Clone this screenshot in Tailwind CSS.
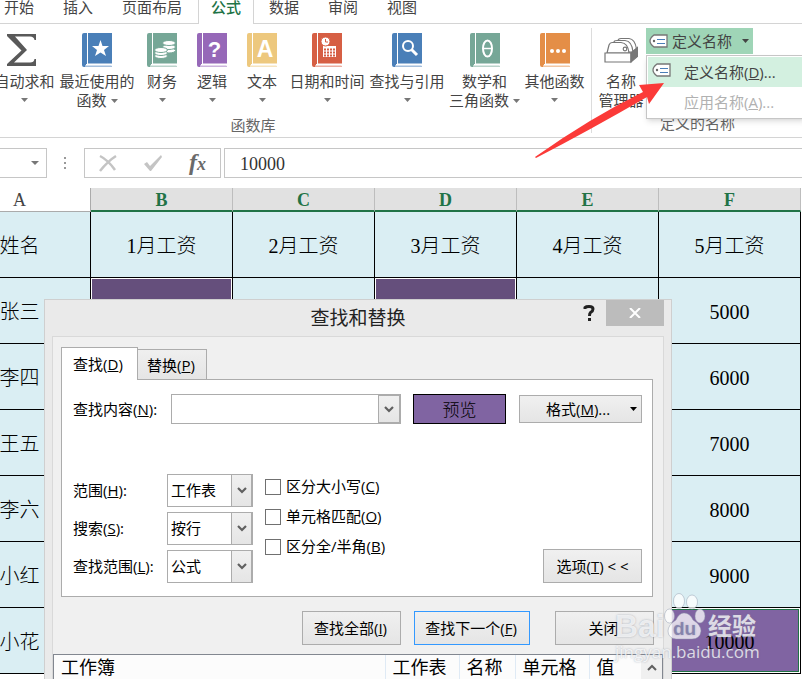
<!DOCTYPE html>
<html lang="zh-CN">
<head>
  <meta charset="UTF-8">
  <title>查找和替换</title>
  <script src="https://cdn.jsdelivr.net/npm/@tailwindcss/browser@4"></script>
</head>
<body class="relative h-screen overflow-hidden bg-white text-[#444] text-[15px] leading-[19px] font-['Open_Sans','Noto_Sans_CJK_SC',sans-serif]">

  <!-- Ribbon tabs -->
  <nav class="flex h-6 whitespace-nowrap">
    <div class="flex flex-1 border-b border-[#d4d4d4] justify-end max-w-[198px] gap-[29px] pr-4">
      <a href="#" class="-mt-[2px]">开始</a>
      <a href="#" class="-mt-[2px]">插入</a>
      <a href="#" class="-mt-[2px]">页面布局</a>
    </div>
    <a href="#" class="border-x border-[#d4d4d4] px-3 text-[#217346] font-medium"><span class="block -mt-[2px]">公式</span></a>
    <div class="flex flex-1 border-b border-[#d4d4d4] gap-[29px] pl-[15px]">
      <a href="#" class="-mt-[2px]">数据</a>
      <a href="#" class="-mt-[2px]">审阅</a>
      <a href="#" class="-mt-[2px]">视图</a>
    </div>
  </nav>

  <!-- Ribbon -->
  <section class="flex h-[114px] border-b border-[#d4d4d4] whitespace-nowrap">
    <div class="relative flex w-[676px] -ml-[85px] shrink-0 flex-col items-end pt-[9px] pr-1">
      <div class="flex">
        <button class="flex w-[65px] flex-col items-center">
          <svg class="h-[34px] w-[34px] -ml-1" viewBox="0 0 34 34"><path d="M1 1H30V7H28.500Q28 3.500 24 3.500H9L21 17L8 29.500H24Q28 29.500 28.500 26H30V33H1V31L15.500 17.500L1 3Z" fill="#595959"/></svg>
          <span class="mt-[5px]">自动求和</span>
          <svg class="mt-[7px] h-1 w-[7px]" viewBox="0 0 7 4"><path d="M0 0H7L3.500 4Z" fill="#777"/></svg>
        </button>
        <button class="flex w-20 flex-col items-center">
          <svg class="h-[34px] w-[30px]" viewBox="0 0 30 34"><path d="M2 0H30V31H4V32.500H30V34H2Q0 34 0 32V2Q0 0 2 0Z" fill="#4a7fb8"/><path d="M5.500 0V31H30V33H3" fill="none" stroke="#fff"/><path d="M18.500 7L20.500 13H27L22 17L24 23L18.500 19.500L13 23L15 17L10 13H16.500Z" fill="#fff"/></svg>
          <span class="mt-[5px]">最近使用的</span>
          <span class="flex items-center gap-1">函数 <svg class="h-1 w-[7px]" viewBox="0 0 7 4"><path d="M0 0H7L3.500 4Z" fill="#777"/></svg></span>
        </button>
        <button class="flex w-[50px] flex-col items-center">
          <svg class="h-[34px] w-[30px]" viewBox="0 0 30 34"><path d="M2 0H30V31H4V32.500H30V34H2Q0 34 0 32V2Q0 0 2 0Z" fill="#76a797"/><path d="M5.500 0V31H30V33H3" fill="none" stroke="#fff"/><g fill="#fff" stroke="#76a797"><ellipse cx="22" cy="17.500" rx="6.500" ry="2.500"/><ellipse cx="22" cy="14" rx="6.500" ry="2.500"/><ellipse cx="22" cy="10" rx="6.500" ry="2.500"/><ellipse cx="14" cy="23" rx="6.500" ry="2.500"/><ellipse cx="14" cy="20" rx="6.500" ry="2.500"/><ellipse cx="14" cy="17" rx="6.500" ry="2.500"/></g></svg>
          <span class="mt-[5px]">财务</span>
          <svg class="mt-[7px] h-1 w-[7px]" viewBox="0 0 7 4"><path d="M0 0H7L3.500 4Z" fill="#777"/></svg>
        </button>
        <button class="flex w-[50px] flex-col items-center">
          <svg class="h-[34px] w-[30px]" viewBox="0 0 30 34"><path d="M2 0H30V31H4V32.500H30V34H2Q0 34 0 32V2Q0 0 2 0Z" fill="#9668b8"/><path d="M5.500 0V31H30V33H3" fill="none" stroke="#fff"/><text x="17.500" y="24" text-anchor="middle" class="font-['Liberation_Sans',sans-serif] text-[22px] font-bold" fill="#fff">?</text></svg>
          <span class="mt-[5px]">逻辑</span>
          <svg class="mt-[7px] h-1 w-[7px]" viewBox="0 0 7 4"><path d="M0 0H7L3.500 4Z" fill="#777"/></svg>
        </button>
        <button class="flex w-[50px] flex-col items-center">
          <svg class="h-[34px] w-[30px]" viewBox="0 0 30 34"><path d="M2 0H30V31H4V32.500H30V34H2Q0 34 0 32V2Q0 0 2 0Z" fill="#edc87e"/><path d="M5.500 0V31H30V33H3" fill="none" stroke="#fff"/><text x="18" y="24" text-anchor="middle" class="font-['Liberation_Sans',sans-serif] text-[23px] font-bold" fill="#fff">A</text></svg>
          <span class="mt-[5px]">文本</span>
          <svg class="mt-[7px] h-1 w-[7px]" viewBox="0 0 7 4"><path d="M0 0H7L3.500 4Z" fill="#777"/></svg>
        </button>
        <button class="flex w-20 flex-col items-center">
          <svg class="h-[34px] w-[30px]" viewBox="0 0 30 34"><path d="M2 0H30V31H4V32.500H30V34H2Q0 34 0 32V2Q0 0 2 0Z" fill="#d65f44"/><path d="M5.500 0V31H30V33H3" fill="none" stroke="#fff"/><path d="M11 13H24V24H11Z" fill="#fff"/><path d="M12 16.500H24M12 19.500H24M12 22.500H24" stroke="#d65f44" stroke-width="2" stroke-dasharray="2 1"/><circle cx="13.500" cy="8.500" r="4.500" fill="#fff" stroke="#d65f44"/><path d="M13.500 6V9H16" fill="none" stroke="#d65f44"/></svg>
          <span class="mt-[5px]">日期和时间</span>
          <svg class="mt-[7px] h-1 w-[7px]" viewBox="0 0 7 4"><path d="M0 0H7L3.500 4Z" fill="#777"/></svg>
        </button>
        <button class="flex w-20 flex-col items-center">
          <svg class="h-[34px] w-[30px]" viewBox="0 0 30 34"><path d="M2 0H30V31H4V32.500H30V34H2Q0 34 0 32V2Q0 0 2 0Z" fill="#4a7fb8"/><path d="M5.500 0V31H30V33H3" fill="none" stroke="#fff"/><circle cx="16" cy="13" r="5" fill="none" stroke="#fff" stroke-width="2"/><path d="M19.500 16.500L25 22" stroke="#fff" stroke-width="3"/></svg>
          <span class="mt-[5px]">查找与引用</span>
          <svg class="mt-[7px] h-1 w-[7px]" viewBox="0 0 7 4"><path d="M0 0H7L3.500 4Z" fill="#777"/></svg>
        </button>
        <button class="flex w-[75px] flex-col items-center">
          <svg class="h-[34px] w-[30px]" viewBox="0 0 30 34"><path d="M2 0H30V31H4V32.500H30V34H2Q0 34 0 32V2Q0 0 2 0Z" fill="#76a797"/><path d="M5.500 0V31H30V33H3" fill="none" stroke="#fff"/><ellipse cx="17.500" cy="15.500" rx="4.500" ry="8" fill="none" stroke="#fff" stroke-width="2"/><path d="M13 15.500H22" stroke="#fff" stroke-width="1.500"/></svg>
          <span class="mt-[5px]">数学和</span>
          <span class="flex items-center gap-1">三角函数 <svg class="h-1 w-[7px]" viewBox="0 0 7 4"><path d="M0 0H7L3.500 4Z" fill="#777"/></svg></span>
        </button>
        <button class="flex w-[65px] flex-col items-center">
          <svg class="h-[34px] w-[30px]" viewBox="0 0 30 34"><path d="M2 0H30V31H4V32.500H30V34H2Q0 34 0 32V2Q0 0 2 0Z" fill="#e48e47"/><path d="M5.500 0V31H30V33H3" fill="none" stroke="#fff"/><g fill="#fff"><circle cx="12" cy="18" r="2"/><circle cx="18" cy="18" r="2"/><circle cx="24" cy="18" r="2"/></g></svg>
          <span class="mt-[5px]">其他函数</span>
          <svg class="mt-[7px] h-1 w-[7px]" viewBox="0 0 7 4"><path d="M0 0H7L3.500 4Z" fill="#777"/></svg>
        </button>
      </div>
      <div class="mt-[6px] w-full pl-1 text-center text-[#666]">函数库</div>
    </div>
    <div class="relative my-1 flex flex-1 flex-col border-l border-[#dcdcdc]">
      <div class="flex h-[89px] pl-1">
        <button class="flex w-[50px] flex-col items-center pt-[5px]">
          <svg class="h-[34px] w-[34px]" viewBox="0 0 34 34" fill="#fff" stroke="#777" stroke-width="1.200"><path d="M12 19L14 8Q14 5.500 17 5.500H25Q31 6 32.500 16L28 19Z"/><path d="M8 19L10 9Q10 7.500 13 7.500H21Q28 8 29 19Z"/><path d="M3 20L5 12Q6 9.500 8 9.500H17Q24 10 25 20Z"/><circle cx="21" cy="16" r="1.800"/><path d="M1 20H27V29H1Z"/><path d="M27 20L34 14V23L27 29Z" fill="#777"/></svg>
          <span class="mt-[5px] flex flex-col items-center"><span>名称</span><span>管理器</span></span>
        </button>
        <button class="flex h-[26px] w-[107px] shrink-0 items-center bg-[#9fd5b7] pl-[3px]">
          <svg class="h-[14px] w-[19px]" viewBox="0 0 19 14"><path d="M5 1H18V13H5Q1 10 1 7Q1 4 5 1Z" fill="#fff" stroke="#777" stroke-width="1.300"/><circle cx="5" cy="7" r="1.200" fill="#666"/><path d="M8 5.500H16M8 9.500H16" stroke="#4a7fb8" stroke-width="1.200"/></svg>
          <span class="ml-1">定义名称</span>
          <svg class="ml-[10px] h-1 w-[7px]" viewBox="0 0 7 4"><path d="M0 0H7L3.500 4Z" fill="#444"/></svg>
        </button>
      </div>
      <div class="pl-[68px] text-[#666]">定义的名称</div>
      <!-- Open drop-down menu -->
      <div class="absolute top-[27px] left-[54px] -right-1 z-10 h-16 border border-[#c6c6c6] bg-white p-px shadow-md">
        <button class="flex h-[30px] w-full items-center bg-[#d3f0e0] pl-1">
          <svg class="-mt-1 h-[14px] w-[19px]" viewBox="0 0 19 14"><path d="M5 1H18V13H5Q1 10 1 7Q1 4 5 1Z" fill="#fff" stroke="#777" stroke-width="1.300"/><circle cx="5" cy="7" r="1.200" fill="#666"/><path d="M8 5.500H16M8 9.500H16" stroke="#4a7fb8" stroke-width="1.200"/></svg>
          <span class="ml-[13px]">定义名称(<u>D</u>)...</span>
        </button>
        <button class="flex h-[30px] w-full items-center pl-9 text-[#b1b1b1]" disabled>应用名称(<u>A</u>)...</button>
      </div>
    </div>
  </section>

  <!-- Formula bar -->
  <section class="flex h-[50px] items-start pt-[10px]">
    <button class="flex h-[30px] w-[47px] items-center justify-end border border-l-0 border-[#c6c6c6] pr-[7px]" aria-label="名称框">
      <svg class="h-1 w-2" viewBox="0 0 8 4"><path d="M0 0H8L4 4Z" fill="#777"/></svg>
    </button>
    <svg class="mx-[17px] mt-[8px] h-[14px] w-[3px]" viewBox="0 0 3 14" fill="#999"><path d="M0 1H2V3H0ZM0 6H2V8H0ZM0 11H2V13H0Z"/></svg>
    <div class="flex h-[30px] w-[137px] items-center border border-[#c6c6c6] pl-[13px]">
      <button aria-label="取消"><svg class="h-[18px] w-5" viewBox="0 0 20 18"><path d="M2 2Q10 6 17 16M18 2Q10 7 2 17" fill="none" stroke="#c4c4c4" stroke-width="2.500"/></svg></button>
      <button aria-label="输入" class="ml-[25px]"><svg class="h-[18px] w-5" viewBox="0 0 20 18"><path d="M1 10L4 8L7 12L18 1L19 3L8 17H7Z" fill="#c4c4c4"/></svg></button>
      <button class="ml-[26px] font-['Liberation_Serif',serif] text-[24px] leading-6 font-bold text-[#6a6a6a] italic">f<span class="text-[18px]">x</span></button>
    </div>
    <input aria-label="编辑栏" value="10000" class="ml-[3px] h-[30px] min-w-0 flex-1 border border-r-0 border-[#c6c6c6] pl-[15px] pt-[3px] font-['Liberation_Serif',serif] text-[18px] text-[#333] outline-none">
  </section>

  <!-- Worksheet -->
  <table class="-ml-[51px] w-[calc(100%+50px)] table-fixed border-separate border-spacing-0 text-center font-['Liberation_Serif','Noto_Sans_CJK_SC',serif] text-[20px] font-light text-black">
    <thead class="text-[18px] leading-5">
      <tr class="h-6">
        <th class="border-r border-b border-[#ababab] pt-px font-normal text-[#444]">A</th>
        <th class="border-r border-b-2 border-r-[#bdbdbd] border-b-[#217346] bg-[#e1e1e1] pt-[2px] font-bold text-[#217346]">B</th>
        <th class="border-r border-b-2 border-r-[#bdbdbd] border-b-[#217346] bg-[#e1e1e1] pt-[2px] font-bold text-[#217346]">C</th>
        <th class="border-r border-b-2 border-r-[#bdbdbd] border-b-[#217346] bg-[#e1e1e1] pt-[2px] font-bold text-[#217346]">D</th>
        <th class="border-r border-b-2 border-r-[#bdbdbd] border-b-[#217346] bg-[#e1e1e1] pt-[2px] font-bold text-[#217346]">E</th>
        <th class="border-r border-b-2 border-r-[#bdbdbd] border-b-[#217346] bg-[#e1e1e1] pt-[2px] font-bold text-[#217346]">F</th>
      </tr>
    </thead>
    <tbody class="bg-[#daeef3] [&_td]:border-r [&_td]:border-b [&_td]:border-black">
      <tr class="h-[66px] [&>td]:pt-1"><td>姓名</td><td>1月工资</td><td>2月工资</td><td>3月工资</td><td>4月工资</td><td>5月工资</td></tr>
      <tr class="h-[66px]">
        <td class="pt-1">张三</td>
        <td class="bg-white p-px"><div class="h-[63px] bg-[#654f7c]"></div></td>
        <td></td>
        <td class="bg-white p-px"><div class="h-[63px] bg-[#654f7c]"></div></td>
        <td></td>
        <td class="pt-1">5000</td>
      </tr>
      <tr class="h-[66px] [&>td]:pt-1"><td>李四</td><td></td><td></td><td></td><td></td><td>6000</td></tr>
      <tr class="h-[66px] [&>td]:pt-1"><td>王五</td><td></td><td></td><td></td><td></td><td>7000</td></tr>
      <tr class="h-[66px] [&>td]:pt-1"><td>李六</td><td></td><td></td><td></td><td></td><td>8000</td></tr>
      <tr class="h-[66px] [&>td]:pt-1"><td>小红</td><td></td><td></td><td></td><td></td><td>9000</td></tr>
      <tr class="h-[66px]">
        <td class="pt-1">小花</td><td></td><td></td><td></td><td></td>
        <td class="bg-white p-px"><div class="flex h-[63px] items-center justify-center border border-[#217346] bg-[#8064a2] pt-1">10000</div></td>
      </tr>
    </tbody>
  </table>

  <!-- Find and replace window -->
  <div role="dialog" aria-labelledby="dlg-title" class="absolute top-[299px] bottom-0 left-[44px] flex w-[628px] flex-col border border-b-0 border-[#cfcfcf] bg-[#eaeaea] px-[7px] text-black">
    <div class="relative flex h-9 shrink-0 items-center justify-center">
      <h1 id="dlg-title" class="text-[19px] leading-6 text-[#222]">查找和替换</h1>
      <div class="absolute top-0 right-0 flex">
        <button aria-label="帮助" class="mr-[11px]"><svg class="h-[26px] w-3" viewBox="0 0 12 26"><path d="M2 9V7.500Q3 6.500 6 6.500Q10 6.500 10 9Q10 11 7.500 12.500Q6.500 13.500 6.500 16" fill="none" stroke="#222" stroke-width="3"/><path d="M5 18H8V21H5Z" fill="#222"/></svg></button>
        <button aria-label="关闭窗口" class="flex h-[26px] w-[58px] items-center justify-center bg-[#bcbcbc]"><svg class="h-[10px] w-3" viewBox="0 0 12 10"><path d="M1 0L11 10M11 0L1 10" stroke="#fff" stroke-width="2"/></svg></button>
      </div>
    </div>

    <div class="flex flex-1 flex-col border border-b-0 border-[#d9d9d9] bg-[#f0f0f0] pt-[10px]">
      <div class="relative z-10 ml-2 flex h-8 items-end">
        <button class="-mb-px h-[33px] w-[77px] border border-b-0 border-[#acacac] bg-white pr-[3px]">查找(<u>D</u>)</button>
        <button class="h-[30px] w-[69px] border border-b-0 border-l-0 border-[#acacac] bg-linear-to-b from-[#efefef] to-[#e5e5e5] pt-px pr-[2px]">替换(<u>P</u>)</button>
      </div>
      <div class="mr-[10px] ml-2 border border-[#acacac] bg-white pt-[14px] pr-[10px] pb-[13px] pl-[11px]">
        <div class="flex h-[30px] items-center">
          <label for="what" class="w-[98px]">查找内容(<u>N</u>):</label>
          <div class="flex h-[30px] w-[230px] border border-[#acacac]">
            <input id="what" class="min-w-0 flex-1 px-1 outline-none">
            <button aria-label="展开" class="flex w-[22px] items-center justify-center border border-[#acacac] bg-linear-to-b from-[#f0f0f0] to-[#e5e5e5]"><svg class="h-[7px] w-[10px]" viewBox="0 0 10 7"><path d="M1 1L5 5L9 1" fill="none" stroke="#606060" stroke-width="2.200"/></svg></button>
          </div>
          <div class="ml-3 flex h-[30px] w-[93px] items-center justify-center border border-black bg-[#8064a2] text-[17px] font-light">预览</div>
          <button class="ml-[13px] flex h-7 flex-1 items-center border border-[#acacac] bg-linear-to-b from-[#f0f0f0] to-[#e5e5e5] pr-1 pl-[26px]">格式(<u>M</u>)...<svg class="ml-auto h-1 w-[7px]" viewBox="0 0 7 4"><path d="M0 0H7L3.500 4Z" fill="#000"/></svg></button>
        </div>
        <div class="mt-[50px] flex">
          <div class="grid grid-cols-[94px_86px] items-center gap-y-[5px]">
            <label for="within">范围(<u>H</u>):</label>
            <div class="relative">
              <select id="within" class="block h-[33px] w-full appearance-none border border-[#acacac] pl-[3px]"><option>工作表</option><option>工作簿</option></select>
              <span class="pointer-events-none absolute inset-y-0 right-0 flex w-[22px] items-center justify-center border border-r-2 border-[#acacac] bg-linear-to-b from-[#f0f0f0] to-[#e5e5e5]"><svg class="h-[7px] w-[10px]" viewBox="0 0 10 7"><path d="M1 1L5 5L9 1" fill="none" stroke="#606060" stroke-width="2.200"/></svg></span>
            </div>
            <label for="search">搜索(<u>S</u>):</label>
            <div class="relative">
              <select id="search" class="block h-[33px] w-full appearance-none border border-[#acacac] pl-[3px]"><option>按行</option><option>按列</option></select>
              <span class="pointer-events-none absolute inset-y-0 right-0 flex w-[22px] items-center justify-center border border-r-2 border-[#acacac] bg-linear-to-b from-[#f0f0f0] to-[#e5e5e5]"><svg class="h-[7px] w-[10px]" viewBox="0 0 10 7"><path d="M1 1L5 5L9 1" fill="none" stroke="#606060" stroke-width="2.200"/></svg></span>
            </div>
            <label for="lookin">查找范围(<u>L</u>):</label>
            <div class="relative">
              <select id="lookin" class="block h-[33px] w-full appearance-none border border-[#acacac] pl-[3px]"><option>公式</option><option>值</option></select>
              <span class="pointer-events-none absolute inset-y-0 right-0 flex w-[22px] items-center justify-center border border-r-2 border-[#acacac] bg-linear-to-b from-[#f0f0f0] to-[#e5e5e5]"><svg class="h-[7px] w-[10px]" viewBox="0 0 10 7"><path d="M1 1L5 5L9 1" fill="none" stroke="#606060" stroke-width="2.200"/></svg></span>
            </div>
          </div>
          <div class="ml-3 flex flex-col gap-[11px] pt-[3px]">
            <label class="flex items-center gap-[5px]"><input type="checkbox" class="size-4 appearance-none border border-[#707070] bg-white"><span>区分大小写(<u>C</u>)</span></label>
            <label class="flex items-center gap-[5px]"><input type="checkbox" class="size-4 appearance-none border border-[#707070] bg-white"><span>单元格匹配(<u>O</u>)</span></label>
            <label class="flex items-center gap-[5px]"><input type="checkbox" class="size-4 appearance-none border border-[#707070] bg-white"><span>区分全/半角(<u>B</u>)</span></label>
          </div>
          <button class="ml-auto h-[34px] w-[99px] self-end border border-[#acacac] bg-linear-to-b from-[#f0f0f0] to-[#e5e5e5]">选项(<u>T</u>) &lt; &lt;</button>
        </div>
      </div>

      <div class="mt-[14px] mr-[9px] flex h-[34px] justify-end">
        <button class="w-[99px] border border-[#acacac] bg-linear-to-b from-[#f0f0f0] to-[#e5e5e5] pr-[2px]">查找全部(<u>I</u>)</button>
        <button class="ml-[13px] w-[116px] border border-[#3399ff] bg-linear-to-b from-[#f0f0f0] to-[#e5e5e5] pr-[2px]">查找下一个(<u>F</u>)</button>
        <button class="ml-[25px] w-[99px] border border-[#acacac] bg-linear-to-b from-[#f0f0f0] to-[#e5e5e5] pr-[2px]">关闭</button>
      </div>

      <div class="mt-[9px] flex flex-1 border-t border-l border-[#828790] bg-[#fcfcfc]">
        <table class="flex-1 table-fixed text-left text-[18px] leading-6">
          <tr class="[&_th]:border-[#dfeaf5] [&_th]:pl-[7px] [&_th]:font-normal">
            <th class="border-r">工作簿</th>
            <th class="w-[74px] border-r">工作表</th>
            <th class="w-14 border-r">名称</th>
            <th class="w-[74px] border-r">单元格</th>
            <th class="w-[52px]">值</th>
          </tr>
        </table>
        <button aria-label="向上滚动" class="flex w-[22px] items-center justify-center border-r border-[#828790] bg-[#f0f0f0]"><svg class="h-[7px] w-[10px]" viewBox="0 0 10 7"><path d="M1 6L5 2L9 6" fill="none" stroke="#606060" stroke-width="2"/></svg></button>
      </div>
    </div>
  </div>

  <!-- Red pointer arrow -->
  <svg class="pointer-events-none absolute top-[80px] left-[530px] z-20 h-[84px] w-[140px]" viewBox="0 0 140 84"><path d="M134 3L119 24L117 17Q60 50 6 78L5 77Q60 38 113 12L109 5Z" fill="#fb3a38"/></svg>

  <!-- Watermark -->
  <div class="pointer-events-none absolute top-[592px] left-[615px] z-20 flex flex-col whitespace-nowrap text-white/75 [text-shadow:0_0_2px_rgba(110,120,140,0.55)]">
    <div class="flex h-[50px] items-end">
      <span class="w-[49px] font-['Liberation_Sans',sans-serif] text-[32px] leading-8 font-bold">Bai</span>
      <svg class="h-[50px] w-[44px]" viewBox="0 0 44 50" fill="#fff" fill-opacity=".75" stroke="#8c96aa" stroke-opacity=".45"><ellipse cx="15" cy="9" rx="5.500" ry="7.500"/><ellipse cx="28" cy="10" rx="5.500" ry="7"/><ellipse cx="5.500" cy="24" rx="5" ry="7"/><ellipse cx="36" cy="24" rx="5" ry="7"/><path d="M20 21Q26 21 29 28Q37 33 37 39Q36 47 28 47H12Q4 46 4 39Q4 33 12 28Q15 21 20 21Z"/><text x="20.500" y="43" text-anchor="middle" stroke="none" fill="#7472a2" class="font-['Liberation_Sans',sans-serif] text-[19px] font-bold">du</text></svg>
      <span class="text-[24px] leading-8 font-bold">经验</span>
    </div>
    <span class="text-[17px] leading-[19px]">jingyan.baidu.com</span>
  </div>
</body>
</html>
